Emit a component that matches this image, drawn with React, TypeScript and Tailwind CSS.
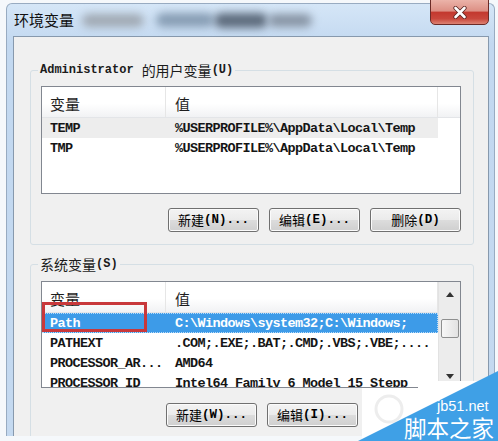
import React from 'react';

const cjk = "font-['Noto_Sans_CJK_SC',sans-serif]";
const mono = "font-['Liberation_Mono','Noto_Sans_CJK_SC',monospace]";

type Row = { name: string; value: string; state?: 'hot' | 'selected' };

const userVars: Row[] = [
  { name: 'TEMP', value: '%USERPROFILE%\\AppData\\Local\\Temp', state: 'hot' },
  { name: 'TMP', value: '%USERPROFILE%\\AppData\\Local\\Temp' },
];

const sysVars: Row[] = [
  { name: 'Path', value: 'C:\\Windows\\system32;C:\\Windows;', state: 'selected' },
  { name: 'PATHEXT', value: '.COM;.EXE;.BAT;.CMD;.VBS;.VBE;....' },
  { name: 'PROCESSOR_AR...', value: 'AMD64' },
  { name: 'PROCESSOR_ID', value: 'Intel64 Family 6 Model 15 Stepp' },
];

function Header({ filler }: { filler: boolean }) {
  return (
    <div
      className={`flex h-[31px] border-b border-[#e3e5e8] bg-[linear-gradient(#ffffff_55%,#f1f2f4)] text-[15px] leading-[15px] text-[#1e1e1e] ${cjk}`}
    >
      <div className="w-[124px] shrink-0 border-r border-[#e6e6e6] pl-[8px] pt-[9px]">变量</div>
      <div className="w-[272px] shrink-0 border-r border-[#e6e6e6] pl-[9px] pt-[9px]">值</div>
      {filler && <div className="flex-1" />}
    </div>
  );
}

function VarRow({ row }: { row: Row }) {
  const look =
    row.state === 'selected'
      ? 'bg-[#3d9be8] text-white outline-1 outline-dotted outline-[#b9dcfa] -outline-offset-1'
      : row.state === 'hot'
        ? 'bg-[#ededed] text-[#151515]'
        : 'text-[#151515]';
  return (
    <div className={`flex h-[20px] w-[396px] pt-[2px] text-[13.5px] leading-[18px] tracking-[-0.6px] font-bold ${mono} ${look}`}>
      <div className="w-[124px] shrink-0 overflow-hidden whitespace-nowrap pl-[8px]">{row.name}</div>
      <div className="w-[272px] shrink-0 overflow-hidden whitespace-nowrap pl-[9px]">{row.value}</div>
    </div>
  );
}

function ScrollBar() {
  return (
    <div className="flex w-[22px] shrink-0 flex-col items-center border-l border-[#e2e2e2] bg-[#ececec]">
      <div className="flex h-[24px] w-full items-center justify-center">
        <div className="h-0 w-0 border-x-[4px] border-b-[5px] border-x-transparent border-b-[#333]" />
      </div>
      <div className="mt-[13px] h-[19px] w-[18px] rounded-[2px] border border-[#8e8f8f] bg-[linear-gradient(90deg,#f7f7f7,#e2e2e2)]" />
      <div className="flex-1" />
      <div className="flex h-[22px] w-full items-center justify-center">
        <div className="h-0 w-0 border-x-[4px] border-t-[5px] border-x-transparent border-t-[#333]" />
      </div>
    </div>
  );
}

function Btn({ zh, tail }: { zh: string; tail: string }) {
  return (
    <button className="flex h-[24px] w-[91px] items-center justify-center rounded-[3px] border border-[#707070] bg-[linear-gradient(#f3f3f3,#ebebeb_48%,#dcdcdc_52%,#cfcfcf)] text-black shadow-[inset_0_0_0_1px_#fbfbfb]">
      <span className={`${cjk} text-[13px] leading-[14px]`}>{zh}</span>
      <span className={`${mono} text-[12.5px] leading-[14px] font-bold`}>{tail}</span>
    </button>
  );
}

function Legend({ latin, zh, key_ }: { latin?: string; zh: string; key_: string }) {
  return (
    <legend className="-ml-[3px] flex h-[14px] items-center px-[2px] text-[#1b1b1b]">
      {latin && <span className={`${mono} mr-[8px] text-[12px] leading-[14px] font-bold`}>{latin}</span>}
      <span className={`${cjk} text-[14px] leading-[14px]`}>{zh}</span>
      <span className={`${mono} text-[12px] leading-[14px] font-bold`}>{key_}</span>
    </legend>
  );
}

export default function App() {
  return (
    <div className="relative h-[441px] w-[498px] overflow-hidden bg-[#f5f8fb]">
      <div className="ml-[6px] mt-[3px] flex h-[433px] w-[489px] flex-col rounded-t-[6px] border-x border-t border-[#98abc1] bg-[linear-gradient(#d5e6f7,#c2d8f0_40px,#c4d9f0)] pl-[6px] pr-[5px]">
        {/* title bar */}
        <div className="flex h-[32px] items-center pl-[1px]">
          <span className={`${cjk} text-[15px] leading-[16px] text-[#111]`}>环境变量</span>
          <span className="ml-[8px] inline-block h-[13px] w-[62px] rounded-full bg-[#a0a9b3] blur-[4px]" />
          <span className="ml-[12px] inline-block h-[14px] w-[58px] rounded-full bg-[#879db4] blur-[4px]" />
          <span className="inline-block h-[15px] w-[54px] rounded-full bg-[#5d6b7c] blur-[4px]" />
          <span className="inline-block h-[13px] w-[44px] rounded-full bg-[#8794a4] blur-[4px]" />
        </div>

        {/* client area */}
        <div className="flex-1 overflow-hidden border-x border-t border-[#8799ad] bg-[#f0f0f0] pl-[16px] pr-[14px]">
          <fieldset className="mt-[26px] rounded-[3px] border border-[#d5dfe5] pb-[12px] pl-[10px] pr-[12px]">
            <Legend latin="Administrator" zh="的用户变量" key_="(U)" />
            <div className="mt-[9px] h-[108px] overflow-hidden border border-[#828790] bg-white">
              <Header filler />
              {userVars.map((r) => (
                <VarRow key={r.name} row={r} />
              ))}
            </div>
            <div className="mt-[14px] flex justify-end gap-[10px]">
              <Btn zh="新建" tail="(N)..." />
              <Btn zh="编辑" tail="(E)..." />
              <Btn zh="删除" tail="(D)" />
            </div>
          </fieldset>

          <fieldset className="mt-[12px] rounded-[3px] border border-[#d5dfe5] pb-[12px] pl-[10px] pr-[12px]">
            <Legend zh="系统变量" key_="(S)" />
            <div className="relative mt-[10px] flex h-[107px] overflow-hidden border border-[#828790] bg-white">
              <div className="w-[396px] shrink-0">
                <Header filler={false} />
                {sysVars.map((r) => (
                  <VarRow key={r.name} row={r} />
                ))}
              </div>
              <ScrollBar />
              <div className="absolute left-0 top-[20px] h-[30px] w-[105px] border-[3px] border-[#c8383b]" />
            </div>
            <div className="mt-[15px] flex gap-[10px] pl-[125px]">
              <Btn zh="新建" tail="(W)..." />
              <Btn zh="编辑" tail="(I)..." />
            </div>
          </fieldset>
        </div>
      </div>

      {/* close button */}
      <div className="absolute left-[430px] top-[-1px] flex h-[26px] w-[59px] items-center justify-center rounded-b-[5px] border border-[#6b2b27] bg-[linear-gradient(#ebb3a9,#dd9085_45%,#c3392f_52%,#c9473c_78%,#dd8373)]">
        <svg width="16" height="13" viewBox="0 0 16 13">
          <path d="M3.5 2 L12.5 11 M12.5 2 L3.5 11" stroke="#5a2420" strokeWidth="4.2" strokeLinecap="round" />
          <path d="M3.5 2 L12.5 11 M12.5 2 L3.5 11" stroke="#ffffff" strokeWidth="2.6" strokeLinecap="round" />
        </svg>
      </div>

      {/* watermark */}
      <svg className="pointer-events-none absolute left-0 top-0" width="498" height="441" viewBox="0 0 498 441">
        <polygon points="362,388 418,388 418,381 498,381 498,441 362,441" fill="#ffffff" />
        <circle cx="389" cy="409" r="13" fill="none" stroke="#ededed" strokeWidth="3" />
        <polygon points="358,441 498,371 498,441" fill="#3fa0e6" />
      </svg>
      <div className="absolute left-[437px] top-[399px] font-['Liberation_Sans',sans-serif] text-[14.5px] leading-[15px] text-white">
        jb51.net
      </div>
      <div className={`absolute left-[404px] top-[416px] text-[22.5px] leading-[23px] text-white ${cjk}`}>脚本之家</div>
    </div>
  );
}
